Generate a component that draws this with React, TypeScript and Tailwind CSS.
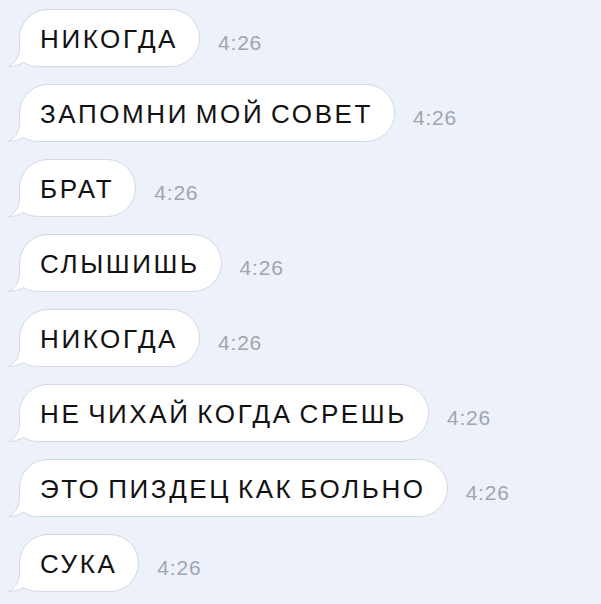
import React from 'react';

const messages = [
  'НИКОГДА',
  'ЗАПОМНИ МОЙ СОВЕТ',
  'БРАТ',
  'СЛЫШИШЬ',
  'НИКОГДА',
  'НЕ ЧИХАЙ КОГДА СРЕШЬ',
  'ЭТО ПИЗДЕЦ КАК БОЛЬНО',
  'СУКА',
];

function Tail() {
  return (
    <svg className="absolute left-[-14px] bottom-[-1px]" width="50" height="28" viewBox="0 0 50 28">
      <path d="M13.5 0 L13.5 8 C13.5 19 9 24 2.5 27.5 C8 27.5 13 26 18 23.5 C22 26.5 27 27.5 36 27.5 L50 27.5 L50 0 Z" fill="#ffffff" />
      <path
        d="M13.5 0 L13.5 8 C13.5 19 9 24 2.5 27.5 C8 27.5 13 26 18 23.5 C22 26.5 27 27.5 36 27.5 L50 27.5"
        fill="none"
        stroke="#d2d8e3"
        strokeWidth={1}
      />
    </svg>
  );
}

export default function App() {
  return (
    <div className="w-[601px] h-[604px] bg-[#edf1fa] pl-[19px] pt-[9px] flex flex-col gap-[17px] font-['Liberation_Sans',Arial,sans-serif] overflow-hidden">
      {messages.map((text, idx) => (
        <div key={idx} className="flex items-center">
          <div className="relative h-[58px] flex items-center bg-white border border-[#d2d8e3] rounded-[29px] pl-[20px] pr-[21px]">
            <Tail />
            <span className="relative mt-[2px] text-[26px] tracking-[2.6px] [word-spacing:-3px] text-[#111111] whitespace-nowrap">
              {text}
            </span>
          </div>
          <span className="ml-[18px] mt-[9px] text-[21px] tracking-[0.8px] text-[#a0a5ae]">4:26</span>
        </div>
      ))}
    </div>
  );
}
